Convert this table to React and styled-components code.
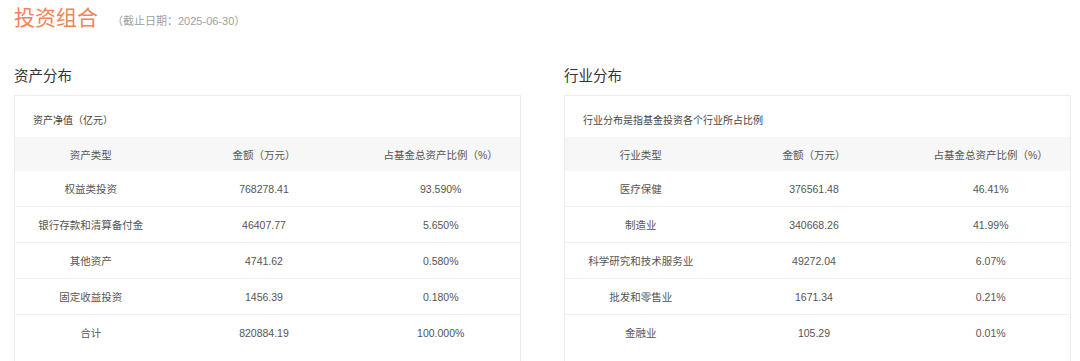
import React from 'react';
import styled, {createGlobalStyle} from 'styled-components';

const GlobalStyle = createGlobalStyle`
body {
    margin: 0;
    background: #fff;
    font-family: 'Liberation Sans', 'Noto Sans CJK SC', sans-serif;
}
`

const Page = styled.div`
width: 1080px;
height: 361px;
overflow: hidden;
padding: 0 9px 0 14px;
box-sizing: border-box;
`

const TitleBar = styled.div`
display: flex;
align-items: baseline;
gap: 14px;
height: 34px;
padding-top: 2px;
box-sizing: border-box;

h2 {
    margin: 0;
    font-family: 'Noto Sans CJK SC', sans-serif;
    font-size: 21px;
    font-weight: 400;
    line-height: 28px;
    color: #f0845a;
}

span {
    font-size: 11px;
    color: #a0a0a0;
}
`

const Columns = styled.div`
display: grid;
grid-template-columns: 507px 507px;
gap: 43px;
margin-top: 32px;
`

const Heading = styled.h3`
margin: 0 0 9px;
font-size: 14.5px;
font-weight: 400;
line-height: 20px;
color: #333;
`

const Panel = styled.div`
border: 1px solid #ececec;
border-bottom: none;
height: 300px;
`

const Caption = styled.div`
padding: 16px 0 0 18px;
height: 41px;
box-sizing: border-box;
font-size: 10px;
color: #444;
`

const Table = styled.table`
width: 100%;
border-collapse: collapse;
table-layout: fixed;
font-size: 10.5px;
color: #555;

th, td {
    height: 35px;
    padding: 0;
    text-align: center;
    font-weight: 400;
}

th {
    height: 34px;
}

thead tr {
    background: #f7f7f7;
}

tbody tr {
    border-bottom: 1px solid #f1f1f1;
}

tbody tr:last-child {
    border-bottom: none;
}
`

const assets = [
    ['权益类投资', '768278.41', '93.590%'],
    ['银行存款和清算备付金', '46407.77', '5.650%'],
    ['其他资产', '4741.62', '0.580%'],
    ['固定收益投资', '1456.39', '0.180%'],
    ['合计', '820884.19', '100.000%']
];

const industries = [
    ['医疗保健', '376561.48', '46.41%'],
    ['制造业', '340668.26', '41.99%'],
    ['科学研究和技术服务业', '49272.04', '6.07%'],
    ['批发和零售业', '1671.34', '0.21%'],
    ['金融业', '105.29', '0.01%']
];

const Section = ({title, caption, typeLabel, rows}) => (
    <div>
        <Heading>{title}</Heading>
        <Panel>
            <Caption>{caption}</Caption>
            <Table>
                <colgroup>
                    <col style={{width: '30%'}}/>
                    <col style={{width: '38.6%'}}/>
                    <col style={{width: '31.4%'}}/>
                </colgroup>
                <thead>
                    <tr>
                        <th>{typeLabel}</th>
                        <th>金额（万元）</th>
                        <th>占基金总资产比例（%）</th>
                    </tr>
                </thead>
                <tbody>
                    {rows.map(row => (
                        <tr key={row[0]}>
                            <td>{row[0]}</td>
                            <td>{row[1]}</td>
                            <td>{row[2]}</td>
                        </tr>
                    ))}
                </tbody>
            </Table>
        </Panel>
    </div>
);

const App = () => {
    return (
        <Page>
            <GlobalStyle/>
            <TitleBar>
                <h2>投资组合</h2>
                <span>（截止日期：2025-06-30）</span>
            </TitleBar>
            <Columns>
                <Section title='资产分布' caption='资产净值（亿元）' typeLabel='资产类型' rows={assets}/>
                <Section title='行业分布' caption='行业分布是指基金投资各个行业所占比例' typeLabel='行业类型' rows={industries}/>
            </Columns>
        </Page>
    );
};

export default App;
